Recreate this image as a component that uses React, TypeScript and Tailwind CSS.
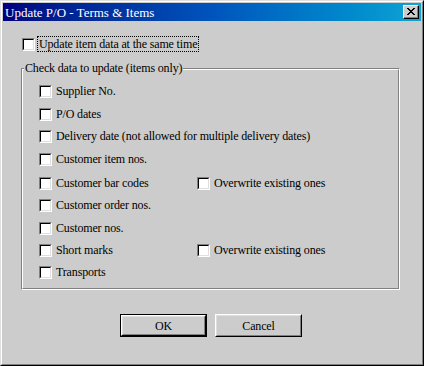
const CheckBox = () => (
  <span className="box-border block h-[13px] w-[13px] shrink-0 border border-b-white border-l-[#808080] border-r-white border-t-[#808080]">
    <span className="box-border block h-full w-full border border-b-[#dfdfdf] border-l-black border-r-[#dfdfdf] border-t-black bg-white" />
  </span>
);

const CheckRow = ({
  label,
  extra,
  className,
}: {
  label: string;
  extra?: string;
  className: string;
}) => (
  <div className={`flex items-start ${className}`}>
    <div className="flex w-[158px] items-center gap-[4px]">
      <CheckBox />
      <span className="whitespace-nowrap leading-[13px]">{label}</span>
    </div>
    {extra && (
      <div className="flex items-center gap-[4px]">
        <CheckBox />
        <span className="whitespace-nowrap leading-[13px]">{extra}</span>
      </div>
    )}
  </div>
);

const Button = ({ label, isDefault }: { label: string; isDefault?: boolean }) => (
  <div
    className={`box-border h-[23px] w-[87px] ${isDefault ? "border border-black" : ""}`}
  >
    <div className="box-border h-full w-full border border-b-black border-l-white border-r-black border-t-white">
      <div className="box-border flex h-full w-full items-center justify-center border border-b-[#808080] border-l-[#dfdfdf] border-r-[#808080] border-t-[#dfdfdf] leading-none">
        {label}
      </div>
    </div>
  </div>
);

export default function App() {
  return (
    <div
      className="box-border h-[366px] w-[424px] border border-b-black border-l-[#dfdfdf] border-r-black border-t-[#dfdfdf] bg-[#cccccc] text-[12px] tracking-[-0.15px] text-black"
      style={{ fontFamily: '"Liberation Serif", "Times New Roman", serif' }}
    >
      <div className="box-border flex h-full w-full flex-col border border-b-[#808080] border-l-white border-r-[#808080] border-t-white p-px">
        {/* title bar */}
        <div className="flex h-[18px] items-center justify-between bg-gradient-to-r from-[#000080] via-[#0054bc] to-[#12a4d4] pl-[2px] pr-[2px]">
          <span className="whitespace-nowrap text-[13px] leading-none tracking-normal text-white">
            Update P/O - Terms &amp; Items
          </span>
          <div className="box-border h-[14px] w-[16px] border border-b-black border-l-white border-r-black border-t-white bg-[#cccccc]">
            <div className="flex h-full w-full items-center justify-center border-b border-r border-[#808080]">
              <svg width="8" height="7" viewBox="0 0 8 7" shapeRendering="crispEdges">
                <path d="M0 0h2v1h-2zM6 0h2v1h-2zM1 1h2v1h-2zM5 1h2v1h-2zM2 2h4v1h-4zM3 3h2v1h-2zM2 4h4v1h-4zM1 5h2v1h-2zM5 5h2v1h-2zM0 6h2v1h-2zM6 6h2v1h-2z" fill="#000" />
              </svg>
            </div>
          </div>
        </div>

        {/* main checkbox */}
        <div className="ml-[19px] mt-[16px] flex items-center gap-[3px]">
          <CheckBox />
          <span className="whitespace-nowrap px-px leading-[14px] outline-1 outline-dotted outline-black">
            Update item data at the same time
          </span>
        </div>

        {/* group box */}
        <div className="relative ml-[18px] mt-[17px] box-border h-[222px] w-[379px] border border-b-white border-l-[#808080] border-r-white border-t-[#808080]">
          <div className="box-border h-full w-full border border-b-[#808080] border-l-white border-r-[#808080] border-t-white pl-[16px] pt-[15px]">
            <CheckRow className="h-[23px]" label="Supplier No." />
            <CheckRow className="h-[22px]" label="P/O dates" />
            <CheckRow
              className="h-[23px]"
              label="Delivery date (not allowed for multiple delivery dates)"
            />
            <CheckRow className="h-[24px]" label="Customer item nos." />
            <CheckRow className="h-[22px]" label="Customer bar codes" extra="Overwrite existing ones" />
            <CheckRow className="h-[23px]" label="Customer order nos." />
            <CheckRow className="h-[22px]" label="Customer nos." />
            <CheckRow className="h-[22px]" label="Short marks" extra="Overwrite existing ones" />
            <CheckRow className="h-[22px]" label="Transports" />
          </div>
          <span className="absolute left-[2px] top-[-8px] whitespace-nowrap bg-[#cccccc] px-px leading-[14px]">
            Check data to update (items only)
          </span>
        </div>

        {/* buttons */}
        <div className="ml-[117px] mt-[24px] flex gap-[8px]">
          <Button label="OK" isDefault />
          <Button label="Cancel" />
        </div>
      </div>
    </div>
  );
}
